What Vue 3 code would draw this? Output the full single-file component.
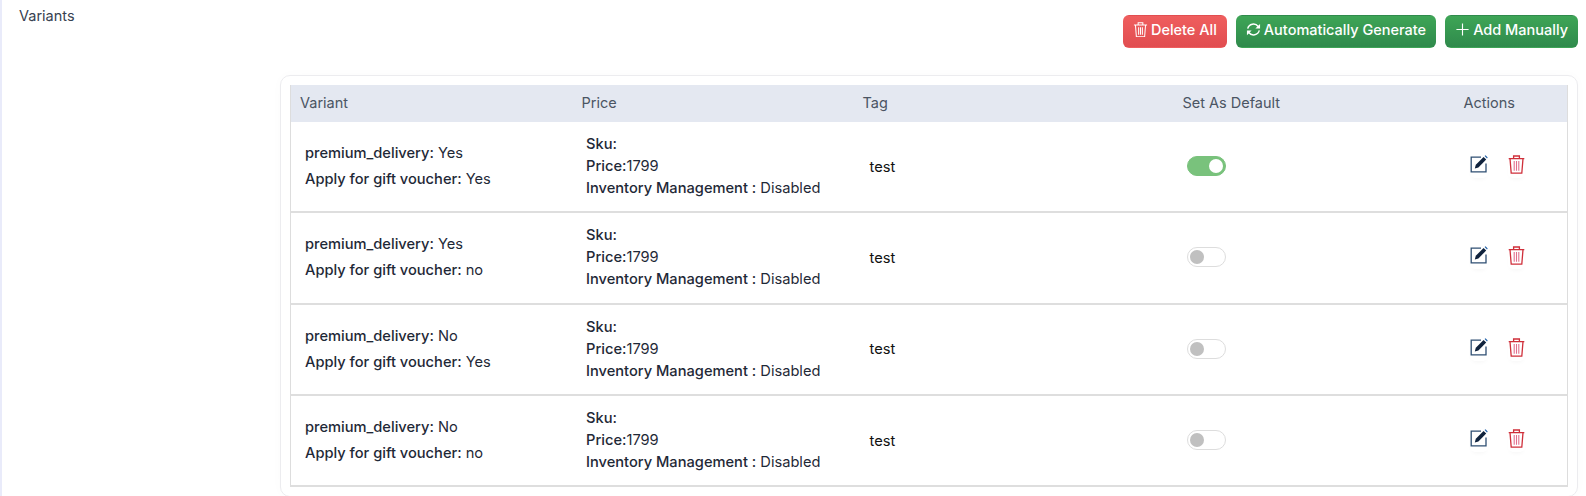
<template>
  <div class="page">
    <div class="top">
      <span class="label">Variants</span>
      <div class="btns">
        <button class="btn red">
          <svg class="ico" viewBox="0 0 16 16" fill="none" stroke="currentColor" stroke-width="1.1"><path d="M1 3.2h14M5.5 3.2V.8h5v2.4M2.6 3.2l1 12.5h8.8l1-12.5M6 5.5v8M8 5.5v8M10 5.5v8" /></svg>
          Delete All
        </button>
        <button class="btn green">
          <svg class="ico" viewBox="0 0 16 16" fill="none" stroke="currentColor" stroke-width="1.5"><path d="M1.8 7A6.3 6.3 0 0 1 13 4.8" /><path d="M14.2 9A6.3 6.3 0 0 1 3 11.2" /><path d="M15 2v5h-5z" fill="currentColor" stroke="none" /><path d="M1 14V9h5z" fill="currentColor" stroke="none" /></svg>
          Automatically Generate
        </button>
        <button class="btn green">
          <svg class="ico" viewBox="0 0 16 16" fill="none" stroke="currentColor" stroke-width="1.2"><path d="M8 1.5v13M1.5 8h13" /></svg>
          Add Manually
        </button>
      </div>
    </div>
    <div class="card">
      <div class="table">
        <div class="row head">
          <div>Variant</div>
          <div>Price</div>
          <div>Tag</div>
          <div>Set As Default</div>
          <div>Actions</div>
        </div>
        <div class="row body" v-for="(r, i) in rows" :key="i">
          <div class="variant">
            <p><b>premium_delivery:</b> {{ r.delivery }}</p>
            <p><b>Apply for gift voucher:</b> {{ r.gift }}</p>
          </div>
          <div class="price">
            <p><b>Sku:</b></p>
            <p><b>Price:</b>1799</p>
            <p><b>Inventory Management :</b> Disabled</p>
          </div>
          <div class="tag">test</div>
          <div class="def">
            <span class="toggle" :class="{ on: r.on }"><i></i></span>
          </div>
          <div class="acts">
            <span class="act">
              <svg width="18" height="18" viewBox="0 0 18 18" fill="none"><path d="M16 8.5v8.3H1.2V2.2H11" stroke="#2f4f73" stroke-width="1.3" /><path d="M4.8 13.4l1-3.6L13.6 2l2.6 2.6-7.8 7.8z" fill="#10233d" /><path d="M14.6 1l.9-.7 2.2 2.2-.7 1z" fill="#1d5fa8" /></svg>
            </span>
            <span class="act">
              <svg width="17" height="19" viewBox="0 0 17 19" fill="none" stroke="#cf2f3a" stroke-width="1.3"><path d="M.7 3.6h15.6M5.6 3.6V1h5.8v2.6M2 3.6l1.2 14.6h10.6L15 3.6" /><path d="M6.2 6v9.8M8.5 6v9.8M10.8 6v9.8" stroke="#e2708e" stroke-width="1.1" /></svg>
            </span>
          </div>
        </div>
      </div>
    </div>
  </div>
</template>

<script setup>
const rows = [
  { delivery: 'Yes', gift: 'Yes', on: true },
  { delivery: 'Yes', gift: 'no', on: false },
  { delivery: 'No', gift: 'Yes', on: false },
  { delivery: 'No', gift: 'no', on: false }
]
</script>

<style>
html, body {
  margin: 0;
  background: #fff;
  overflow: hidden;
}
</style>

<style scoped>
.page {
  height: 496px;
  box-sizing: border-box;
  border-left: 2px solid #e9ebfa;
  padding: 0 8px 0 17px;
  font-family: Inter, "Liberation Sans", sans-serif;
  font-size: 14.65px;
  color: #1f2937;
  overflow: hidden;
}

.top {
  display: flex;
  justify-content: space-between;
  height: 75px;
  box-sizing: border-box;
  padding-top: 15px;
}

.label {
  margin-top: -8px;
  line-height: 17px;
  font-size: 14.5px;
  color: #374151;
}

.btns {
  display: flex;
  gap: 9px;
  align-items: flex-start;
}

.btn {
  height: 33px;
  display: flex;
  align-items: center;
  justify-content: center;
  gap: 4px;
  padding: 0 9px 4px;
  border: 1px solid transparent;
  border-radius: 6px;
  color: #fff;
  font-family: inherit;
  font-size: 14.5px;
  font-weight: 500;
}

.ico {
  width: 15px;
  height: 15px;
  margin-right: -1px;
}

.red {
  background: linear-gradient(#ef5e5e, #e14d50);
}

.green {
  background: linear-gradient(#3ea556, #2f8a4c);
}

.card {
  margin-left: 261px;
  height: 422px;
  box-sizing: border-box;
  border: 1px solid #ececef;
  border-radius: 10px;
  padding: 9px;
  box-shadow: 0 0 12px rgba(0, 0, 0, 0.02);
}

.table {
  border-left: 1px solid #ddd;
  border-right: 1px solid #ddd;
}

.row {
  display: grid;
  grid-template-columns: 281px 281px 320px 281px 1fr;
}

.head {
  height: 37px;
  box-sizing: border-box;
  padding-bottom: 2px;
  align-items: center;
  background: #e4e8f1;
  color: #4b5563;
  font-size: 14.5px;
}

.head > div {
  padding-left: 9.5px;
}

.head > div:first-child {
  padding-left: 9px;
}

.body {
  height: 91.3px;
  align-items: center;
  box-sizing: border-box;
  border-bottom: 2px solid #dedede;
}

p {
  margin: 0;
}

b {
  font-weight: 500;
}

.variant {
  padding: 0 0 1px 14px;
  line-height: 26px;
}

.price {
  padding: 0 0 1px 14px;
  line-height: 22px;
}

.tag {
  padding-left: 16.5px;
  color: #111;
}

.def {
  padding-left: 14px;
}

.toggle {
  display: block;
  width: 39px;
  height: 20px;
  margin-top: -1px;
  box-sizing: border-box;
  border: 1px solid #ddd;
  border-radius: 10px;
  padding: 2px;
}

.toggle i {
  display: block;
  width: 14px;
  height: 14px;
  border-radius: 50%;
  background: #c0c0c0;
}

.toggle.on {
  background: #79c27c;
  border-color: #79c27c;
}

.toggle.on i {
  background: #fff;
  margin-left: 19px;
}

.acts {
  display: flex;
  gap: 20px;
  padding-left: 15.5px;
}

.act {
  display: flex;
  padding-bottom: 4px;
  border-radius: 5px;
  box-shadow: 0 3px 4px -2px rgba(0, 0, 0, 0.04);
}
</style>
